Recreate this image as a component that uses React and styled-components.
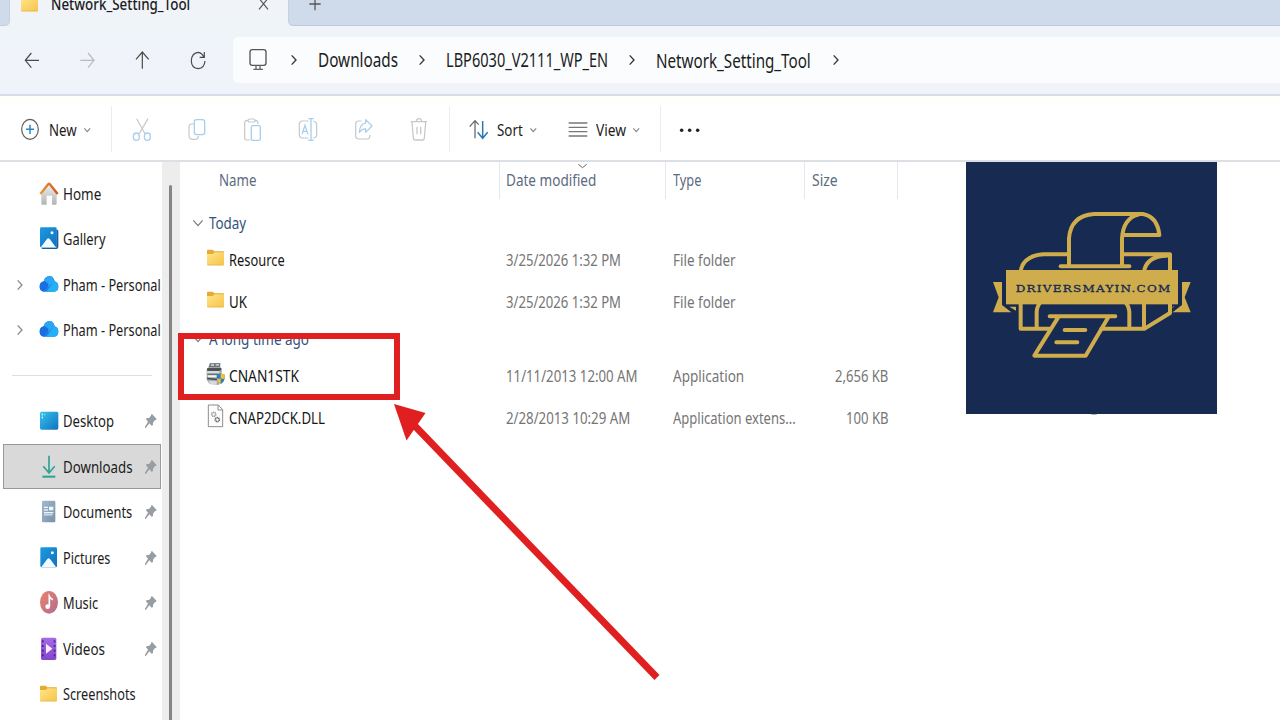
import React, { useLayoutEffect, useRef, useState } from "react";
import styled, { createGlobalStyle } from "styled-components";

const Global = createGlobalStyle`
  * { box-sizing: border-box; }
  html, body { margin: 0; padding: 0; overflow: hidden; background: #fff; }
`;

const Window = styled.div`
  position: relative;
  width: 1280px;
  height: 720px;
  overflow: hidden;
  display: flex;
  flex-direction: column;
  background: #fff;
  color: #1c1c1c;
  font-family: "Noto Sans", "Open Sans", sans-serif;
`;

/* Condensed text: glyphs are squeezed until the label is exactly $w wide. */
const LabelBox = styled.span`
  display: block;
  flex: none;
  width: ${(p) => p.$w}px;
  margin-left: ${(p) => p.$ml || 0}px;
  margin-top: ${(p) => p.$mt || 0}px;
  font-size: ${(p) => p.$size || 17}px;
  font-weight: ${(p) => p.$weight || 400};
  line-height: 24px;
  color: ${(p) => p.$color || "inherit"};
  white-space: nowrap;
`;
const LabelInk = styled.span`
  display: inline-block;
  transform-origin: 0 50%;
`;

function Label({ children, w, size, color, ml, mt, weight }) {
  const ref = useRef(null);
  const [k, setK] = useState(0.8);
  useLayoutEffect(() => {
    setK(w / ref.current.offsetWidth);
  }, [w, children]);
  return (
    <LabelBox $w={w} $size={size} $color={color} $ml={ml} $mt={mt} $weight={weight}>
      <LabelInk ref={ref} style={{ transform: `scaleX(${k})` }}>{children}</LabelInk>
    </LabelBox>
  );
}

const Glyph = styled.svg`
  display: block;
  flex: none;
  overflow: visible;
  margin-left: ${(p) => p.$ml || 0}px;
  margin-top: ${(p) => p.$mt || 0}px;
  fill: none;
`;

/* All drawings use three units per pixel. */
function Icon({ w = 20, h = 24, ml, mt, children }) {
  return (
    <Glyph width={w} height={h} viewBox={`0 0 ${w * 3} ${h * 3}`} $ml={ml} $mt={mt}>
      {children}
    </Glyph>
  );
}

/* ---------- tab strip ---------- */
const TabStrip = styled.div`
  display: flex;
  height: 26px;
  flex: none;
  background: #f0f4f9;
`;
const InactiveEdge = styled.div`
  width: 10px;
  background: #cfdbea;
  border-bottom: 1px solid #bfcde0;
  border-right: 1px solid #c4d1e3;
  border-radius: 0 0 5px 0;
`;
const ActiveTab = styled.div`
  display: flex;
  align-items: center;
  width: 278px;
  height: 43px;
  margin-top: -17px;
  padding-left: 10px;
`;
const StripRest = styled.div`
  flex: 1;
  background: #cfdbea;
  border-bottom: 1px solid #bccadd;
  border-left: 1px solid #c4d1e3;
  border-radius: 0 0 0 5px;
`;
const NewTab = styled.div`
  display: flex;
  align-items: center;
  height: 43px;
  margin-top: -17px;
  padding-left: 20px;
`;

/* ---------- navigation ---------- */
const NavBar = styled.div`
  display: flex;
  align-items: center;
  height: 70px;
  flex: none;
  padding: 11px 0 12px 22px;
  background: linear-gradient(#eff4f9, #f0f3fa);
  border-bottom: 2px solid #d6dde8;
`;
const AddressBar = styled.div`
  display: flex;
  align-items: center;
  flex: 1;
  height: 46px;
  margin-left: 23px;
  padding-left: 16px;
  background: #fafcfe;
  border-radius: 5px 0 0 5px;
`;

/* ---------- command bar ---------- */
const CommandBar = styled.div`
  display: flex;
  align-items: center;
  height: 66px;
  flex: none;
  padding: 4px 0 0 20px;
  background: linear-gradient(#fefefb, #fff 12px);
  border-bottom: 2px solid #dcdfe4;
`;
const Divider = styled.div`
  width: 1px;
  height: 46px;
  background: #ececec;
  margin: 0 0 2px ${(p) => p.$ml}px;
`;
const ToolGroup = styled.div`
  display: flex;
  align-items: center;
  gap: 35.5px;
  margin-left: 19.5px;
`;

/* ---------- body ---------- */
const Body = styled.div`
  display: flex;
  flex: 1;
  min-height: 0;
`;
const Sidebar = styled.div`
  width: 162px;
  flex: none;
  padding-top: 8.75px;
`;
const SideRow = styled.div`
  display: flex;
  align-items: center;
  width: 158px;
  height: 45.5px;
  margin-left: 3px;
  overflow: hidden;
  background: ${(p) => (p.$active ? "#d9d9d9" : "transparent")};
  box-shadow: ${(p) => (p.$active ? "inset 0 0 0 1px #989898" : "none")};
`;
const Expander = styled.div`
  width: 36px;
  flex: none;
  padding-left: 14px;
`;
const Spacer = styled.div`
  flex: 1;
`;
const SideRule = styled.div`
  height: 45.5px;
  padding: 22px 10px 0 12px;
  &::after {
    content: "";
    display: block;
    height: 1.5px;
    background: #dedede;
  }
`;
const ScrollTrack = styled.div`
  width: 18px;
  flex: none;
  padding: 23px 0 0 7px;
  background: #ededed;
  &::after {
    content: "";
    display: block;
    width: 3px;
    height: 100%;
    background: #858585;
    border-radius: 2px 2px 0 0;
  }
`;
const FileList = styled.div`
  width: 718px;
  flex: none;
`;
const HeadRow = styled.div`
  display: grid;
  grid-template-columns: 319.5px 166px 139px 93px;
  height: 36.5px;
  margin-bottom: 8px;
`;
const HeadCell = styled.div`
  position: relative;
  display: flex;
  align-items: center;
  padding-left: ${(p) => p.$pad || 7}px;
  border-right: 1px solid #e3e6ea;
`;
const SortMark = styled.div`
  position: absolute;
  left: 78.5px;
  top: 1px;
`;
const GroupRow = styled.div`
  display: flex;
  align-items: center;
  height: 32px;
  padding-left: 13px;
`;
const FileRow = styled.div`
  display: grid;
  grid-template-columns: 326px 166.5px 135px 80.5px;
  align-items: center;
  height: 42px;
`;
const FileName = styled.div`
  display: flex;
  align-items: center;
  padding-left: 26px;
`;
const SizeCell = styled.div`
  display: flex;
  justify-content: flex-end;
`;

/* ---------- overlays ---------- */
const LogoCard = styled.svg`
  position: absolute;
  left: 966px;
  top: 162px;
`;
const Highlight = styled.div`
  position: absolute;
  left: 177.5px;
  top: 333px;
  width: 222.5px;
  height: 67px;
  border: 6.5px solid #e02020;
`;
const Arrow = styled.svg`
  position: absolute;
  left: 390px;
  top: 400px;
`;
const Nub = styled.div`
  position: absolute;
  left: 1090px;
  top: 412px;
  width: 8px;
  height: 3px;
  background: #a9aec0;
  border-radius: 0 0 4px 4px;
`;

const Right = ({ ml, c = "#444", s = 4 }) => (
  <Icon w={6} h={12} ml={ml}>
    <path d="M2 4 L15 18 L2 32" stroke={c} strokeWidth={s} />
  </Icon>
);
const Down = ({ ml, w = 6.5, c = "#888", s = 3.5 }) => (
  <Icon w={w} h={6} ml={ml}>
    <path d={`M1 4 L${w * 1.5} 14 L${w * 3 - 1} 4`} stroke={c} strokeWidth={s} />
  </Icon>
);
const GroupMark = () => (
  <Icon w={10} h={8}>
    <path d="M1 4 L15 20 L29 4" stroke="#777" strokeWidth="3.5" />
  </Icon>
);

const FolderArt = ({ y = 11 }) => (
  <g transform={`translate(0 ${y})`}>
    <path d="M3 3 Q3 0 6 0 H20 L25 5 H52 Q54 5 54 8 V20 H3Z" fill="#e3ac33" />
    <path d="M3 13 H20 L26 8 H54 V44 Q54 47 51 47 H6 Q3 47 3 44Z" fill="url(#folderFill)" />
    <path d="M4 46 H53" stroke="#dfb040" strokeWidth="2" />
  </g>
);

const PhotoArt = ({ h }) => (
  <>
    <rect x="3" y="1" width="50" height={h} rx="4" fill="url(#photoFill)" />
    <path d={`M6 ${h} L24 ${h - 24} Q28 ${h - 28} 32 ${h - 24} L50 ${h}Z`} fill="#f2fbff" />
    <circle cx="39" cy="17" r="4.5" fill="#e4f8ff" />
  </>
);

const art = {
  home: (
    <>
      <path d="M7 34 L30 10 L53 34 V65 Q53 68 50 68 H39 V41 H23 V68 H10 Q7 68 7 65Z" fill="url(#wallFill)" />
      <path d="M4 36 L28 6 Q30 4 32 6 L56 36" stroke="url(#roofFill)" strokeWidth="7" strokeLinejoin="round" />
    </>
  ),
  gallery: (
    <>
      <path d="M52 8 H55 Q58 9 58 13 V60 Q58 66 52 66 H12 Q8 66 7 62 H52Z" fill="#175d9b" />
      <PhotoArt h={60} />
    </>
  ),
  cloud: (
    <>
      <path d="M15 56 Q2 54 2 41 Q2 28 14 25 Q18 10 31 9 Q43 9 47 25 Q58 28 58 41 Q58 55 45 56Z" fill="#1583e6" />
      <path d="M14 25 Q18 10 31 9 Q43 9 47 25 L28 42 Q24 28 14 25Z" fill="#2ba6f2" />
      <path d="M22 56 L44 26 Q58 28 58 41 Q58 55 45 56Z" fill="#23b0f5" />
      <path d="M14 25 Q24 25 29 36 L15 56 Q2 53 2 41 Q2 28 14 25Z" fill="#1a6fe0" />
    </>
  ),
  desktop: (
    <>
      <rect x="3" y="8" width="55" height="54" rx="5" fill="url(#deskFill)" />
      <g fill="#d9f6ff">
        <rect x="8" y="14" width="4" height="5" /><rect x="8" y="23" width="4" height="5" />
        <rect x="15" y="14" width="4" height="5" opacity=".5" />
      </g>
    </>
  ),
  download: (
    <g stroke="#2fa193">
      <path d="M30 2 V54 M13 34 L30 54 L47 34" strokeWidth="5" />
      <path d="M10 65 H49" strokeWidth="6" />
    </g>
  ),
  document: (
    <>
      <rect x="9" y="2" width="40" height="65" rx="4" fill="url(#docFill)" />
      <g fill="#eef5fb">
        <rect x="15" y="20" width="12" height="4" /><rect x="30" y="20" width="13" height="11" />
        <rect x="15" y="28" width="12" height="4" /><rect x="15" y="36" width="28" height="4" />
        <rect x="15" y="43" width="26" height="3" />
      </g>
    </>
  ),
  pictures: <g transform="translate(1 3)"><PhotoArt h={60} /></g>,
  music: (
    <>
      <ellipse cx="30" cy="34" rx="27" ry="34" fill="url(#musicFill)" />
      <ellipse cx="26" cy="47" rx="7" ry="7" fill="#fff" />
      <path d="M31 47 V16 Q36 25 42 26" stroke="#fff" strokeWidth="5" />
    </>
  ),
  video: (
    <>
      <rect x="6" y="2" width="46" height="67" rx="5" fill="url(#videoFill)" />
      <g fill="#4b2288">
        {[10, 24, 38, 52].map((y) => (
          <React.Fragment key={y}>
            <rect x="9" y={y} width="5" height="6" /><rect x="44" y={y} width="5" height="6" />
          </React.Fragment>
        ))}
      </g>
      <path d="M21 20 L40 35 L21 50Z" fill="#f7efff" />
    </>
  ),
  folder: <FolderArt />,
};

const Pin = () => (
  <Icon w={12} h={14}>
    <path d="M21 0 L35 15 L33 18 L30 18 L24 26 L24 33 L20 35 L13 28 L3 41 L0 42 L0 38 L9 23 L3 16 L5 12 L12 12 L18 5 L18 2Z" fill="#969da3" />
  </Icon>
);

function SideItem({ icon, name, w, pin, expand, active }) {
  return (
    <SideRow $active={active}>
      <Expander>{expand && <Right c="#8a8a8a" s={4} />}</Expander>
      <Icon>{art[icon]}</Icon>
      <Label ml={4} w={w}>{name}</Label>
      <Spacer />
      {pin && <Pin />}
      {pin && <Icon w={4} h={2} />}
    </SideRow>
  );
}

const fileArt = {
  folder: (
    <Icon w={18} h={18} mt={-3}><FolderArt y={2} /></Icon>
  ),
  printer: (
    <Icon w={20} h={24} mt={-1}>
      <path d="M8 12 L12 1 H43 V12 L47 18 V46 L38 66 L10 62 L2 50 V20Z" fill="#a3a8ab" />
      <path d="M12 1 H43 L41 12 H8Z" fill="#6d7377" />
      <path d="M16 3 H24 V9 H14Z M29 3 H39 V8 H29Z" fill="#c3c8cb" />
      <path d="M4 15 H46 V20 L40 24 H3Z" fill="#4c5256" />
      <path d="M3 24 H40 V31 H4Z" fill="#d9dcde" />
      <path d="M4 32 H38 V36 H5Z" fill="#6a7074" />
      <path d="M5 37 H37 V43 H6Z" fill="#f0f1f1" />
      <path d="M3 44 L36 47 V52 L4 49Z" fill="#42484c" />
      <path d="M8 53 L34 55 L30 67 L12 64Z" fill="#d5d9dc" />
      <path d="M32 35 L44 31 L56 35 V48 Q54 58 44 64 Q34 58 32 48Z" fill="#2c7fc4" />
      <path d="M44 31 L56 35 V47 H44Z M32 47 H44 V64 Q34 58 32 47Z" fill="#f4c22c" />
    </Icon>
  ),
  dll: (
    <Icon w={20} h={24} mt={-3}>
      <path d="M7 3 H37 L50 17 V68 H7Z" fill="#fdfdfd" stroke="#777" strokeWidth="2.5" />
      <path d="M36 3 V18 H50" stroke="#777" strokeWidth="2.5" />
      <circle cx="23" cy="31" r="6.5" stroke="#999" strokeWidth="4" strokeDasharray="3.5 1.6" />
      <circle cx="34" cy="47" r="6" stroke="#666" strokeWidth="5" strokeDasharray="3.5 1.2" />
      <circle cx="23" cy="31" r="5" stroke="#aaa" strokeWidth="2" />
    </Icon>
  ),
};

function FileItem({ icon, name, nameW, date, dateW, type, typeW, size, sizeW }) {
  const gray = "#757575";
  return (
    <FileRow>
      <FileName>
        {fileArt[icon]}
        <Label ml={icon === "folder" ? 5 : 3} w={nameW} color="#151515">{name}</Label>
      </FileName>
      <Label w={dateW} color={gray}>{date}</Label>
      <Label w={typeW} color={gray}>{type}</Label>
      <SizeCell>{size && <Label w={sizeW} color={gray}>{size}</Label>}</SizeCell>
    </FileRow>
  );
}

const Gradients = () => (
  <Glyph width="0" height="0">
    <defs>
      <linearGradient id="folderFill" x1="0" y1="0" x2="1" y2="1">
        <stop offset="0" stopColor="#ffe38c" /><stop offset="1" stopColor="#f6c545" />
      </linearGradient>
      <linearGradient id="photoFill" x1="0" y1="0" x2="1" y2="1">
        <stop offset="0" stopColor="#1b9be0" /><stop offset="1" stopColor="#1470bd" />
      </linearGradient>
      <linearGradient id="wallFill" x1="0" y1="0" x2="0" y2="1">
        <stop offset="0" stopColor="#ededed" /><stop offset="1" stopColor="#b3b3b3" />
      </linearGradient>
      <linearGradient id="roofFill" x1="0" y1="0" x2="1" y2="0">
        <stop offset="0" stopColor="#e99a2e" /><stop offset="1" stopColor="#cf5026" />
      </linearGradient>
      <linearGradient id="deskFill" x1="0" y1="0" x2="1" y2="1">
        <stop offset="0" stopColor="#35c3ee" /><stop offset="1" stopColor="#1272bf" />
      </linearGradient>
      <linearGradient id="docFill" x1="0" y1="0" x2="1" y2="1">
        <stop offset="0" stopColor="#a2b9cc" /><stop offset="1" stopColor="#7891ab" />
      </linearGradient>
      <linearGradient id="musicFill" x1="0" y1="0" x2="1" y2="1">
        <stop offset="0" stopColor="#e98468" /><stop offset="1" stopColor="#b56a94" />
      </linearGradient>
      <linearGradient id="videoFill" x1="0" y1="0" x2="0" y2="1">
        <stop offset="0" stopColor="#a56be6" /><stop offset="1" stopColor="#8344cf" />
      </linearGradient>
    </defs>
  </Glyph>
);

const gold = "#d0ad4c";

function Logo() {
  return (
    <LogoCard width="251" height="252" viewBox="18 21 753 756" preserveAspectRatio="none">
      <rect x="18" y="21" width="753" height="756" fill="#172b52" />
      <g fill="none" stroke={gold} strokeWidth="12" strokeLinecap="round" strokeLinejoin="round">
        <path d="M327 330 V250 Q332 182 402 177 H548 Q592 184 598 240 H490" />
        <path d="M486 330 V250 Q490 190 535 179" />
        <path d="M302 334 H508" />
        <path d="M322 298 H250 Q188 303 182 350 M490 298 H630 V350" />
        <path d="M552 350 Q560 303 620 302" />
        <path d="M182 445 V521 H268 M230 521 V470 Q232 448 245 440 M424 521 H554 L630 474 V445 M508 521 V470 Q506 450 494 440 M552 445 V518" />
        <path d="M269 484 H466 M294 488 L223 602 H377 L444 488 M314 525 H376 M289 562 H352" />
      </g>
      <g fill={gold}>
        <path d="M99 381 H126 V450 L154 472 H99 L116 427Z M148 455 H168 V467Z" />
        <path d="M692 381 H666 V450 L638 472 H692 L674 427Z M638 455 L643 453 L638 460Z" />
        <rect x="138" y="345" width="516" height="103" />
      </g>
      <text
        x="167" y="411" fill="#172b52" stroke="#172b52" strokeWidth="0.9"
        fontFamily='"DejaVu Serif", serif' fontSize="28"
        letterSpacing="3" textLength="468" lengthAdjust="spacingAndGlyphs"
      >
        DRIVERSMAYIN.COM
      </text>
    </LogoCard>
  );
}

const faint = "#c6c8ca";
const blue = "#a5cfee";

export default function App() {
  return (
    <Window>
      <Global />
      <TabStrip>
        <Gradients />
        <InactiveEdge />
        <ActiveTab>
          <Icon w={20} h={24} mt={-1}><FolderArt y={11} /></Icon>
          <Label ml={11} mt={-1} w={139.5} size={17} weight={500}>Network_Setting_Tool</Label>
          <Icon w={11} h={12} ml={67} mt={-1}>
            <path d="M3 1 L30 34 M30 1 L3 34" stroke="#555" strokeWidth="3.5" />
          </Icon>
        </ActiveTab>
        <StripRest>
          <NewTab>
            <Icon w={12} h={12} mt={-1}>
              <path d="M18 0 V37 M1 18 H35" stroke="#555" strokeWidth="3.8" />
            </Icon>
          </NewTab>
        </StripRest>
      </TabStrip>

      <NavBar>
        <Icon ml={2}>
          <path d="M4 37 H45 M22 15 L4 37 L22 59" stroke="#4a4a4a" strokeWidth="3.6" />
        </Icon>
        <Icon ml={36}>
          <path d="M1 37 H42 M24 15 L42 37 L24 59" stroke="#b7bbbf" strokeWidth="3.6" />
        </Icon>
        <Icon ml={35}>
          <path d="M22 62 V13 M3 34 L22 12 L41 34" stroke="#4a4a4a" strokeWidth="3.6" />
        </Icon>
        <Icon ml={35}>
          <path d="M45 39 Q43 61 25 62 Q4 60 4 38 Q5 15 25 13 Q36 14 41 27 M43 12 V28 H29" stroke="#4a4a4a" strokeWidth="3.6" />
        </Icon>
        <AddressBar>
          <Icon w={20} h={24}>
            <rect x="3" y="5" width="48" height="47" rx="7" stroke="#555" strokeWidth="4" />
            <path d="M21 52 V63 M33 52 V63 M13 64 H42" stroke="#666" strokeWidth="4" />
          </Icon>
          <Right ml={21.5} c="#333" />
          <Label ml={21.5} w={80} size={19.5}>Downloads</Label>
          <Right ml={21} c="#333" />
          <Label ml={21} w={162} size={19.5}>LBP6030_V2111_WP_EN</Label>
          <Right ml={21} c="#333" />
          <Label ml={21} mt={2} w={155} size={19.5}>Network_Setting_Tool</Label>
          <Right ml={21.5} c="#333" />
        </AddressBar>
      </NavBar>

      <CommandBar>
        <Icon ml={0}>
          <ellipse cx="30" cy="34" rx="25" ry="30" stroke="#5c5c5c" strokeWidth="3.6" />
          <path d="M30 20 V48 M18 34 H42" stroke="#2c86c2" strokeWidth="4.5" />
        </Icon>
        <Label ml={9} w={28}>New</Label>
        <Down ml={7} />
        <Divider $ml={20.5} />
        <ToolGroup>
          <Icon>
            <path d="M14 2 L39 47 M48 2 L22 47" stroke={faint} strokeWidth="3.5" />
            <ellipse cx="13" cy="56" rx="9" ry="11" stroke={blue} strokeWidth="4" />
            <ellipse cx="46" cy="56" rx="9" ry="11" stroke={blue} strokeWidth="4" />
          </Icon>
          <Icon>
            <path d="M20 18 H12 Q6 19 6 26 V54 Q7 64 18 64 H26 Q34 63 34 54" stroke={faint} strokeWidth="3.6" />
            <rect x="22" y="5" width="31" height="45" rx="7" stroke={blue} strokeWidth="4" />
          </Icon>
          <Icon>
            <path d="M15 8 H8 Q5 9 5 14 V60 Q5 66 10 66 H22 M35 8 H41 Q45 9 45 19" stroke={faint} strokeWidth="3.6" />
            <rect x="15" y="3" width="21" height="9" rx="4" stroke={faint} strokeWidth="3.6" />
            <rect x="25" y="23" width="27" height="44" rx="5" stroke={blue} strokeWidth="4" />
          </Icon>
          <Icon>
            <path d="M32 9 H12 Q4 10 4 19 V51 Q5 60 12 60 H32 M46 9 Q55 10 56 19 V51 Q55 59 46 60" stroke={faint} strokeWidth="3.6" />
            <path d="M12 49 L21 22 L30 49 M15 40 H27" stroke={blue} strokeWidth="3.8" />
            <path d="M39 3 V66 M31 2 H47 M31 67 H47" stroke={blue} strokeWidth="4" />
          </Icon>
          <Icon>
            <path d="M22 9 H13 Q5 10 5 19 V54 Q6 63 13 63 H40 Q48 62 48 50" stroke={faint} strokeWidth="3.6" />
            <path d="M35 5 L54 24 L35 43 V33 Q24 32 16 43 Q17 18 35 15Z" stroke={blue} strokeWidth="3.8" strokeLinejoin="round" />
          </Icon>
          <Icon>
            <path d="M5 11 H54 M22 10 Q23 2 30 2 Q37 2 38 10 M9 12 L13 61 Q14 66 19 66 H40 Q45 66 46 61 L50 12 M24 27 V49 M35 27 V49" stroke={faint} strokeWidth="3.8" />
          </Icon>
        </ToolGroup>
        <Divider $ml={20} />
        <Icon ml={18.5}>
          <path d="M18 61 V9 M2 26 L18 8 L29 20" stroke="#666" strokeWidth="3.8" />
          <path d="M41 9 V60 M26 43 L41 61 L56 43" stroke="#2679b5" strokeWidth="4.4" />
        </Icon>
        <Label ml={8} w={26}>Sort</Label>
        <Down ml={7} />
        <Icon ml={31.5}>
          <path d="M2 15 H58 M2 28 H58 M2 41 H58 M2 54 H58" stroke="#777" strokeWidth="4.2" />
        </Icon>
        <Label ml={8} w={30}>View</Label>
        <Down ml={7} />
        <Divider $ml={21} />
        <Icon ml={19}>
          <g fill="#222">
            <circle cx="5" cy="37" r="5.3" /><circle cx="29" cy="37" r="5.3" /><circle cx="53" cy="37" r="5.3" />
          </g>
        </Icon>
      </CommandBar>

      <Body>
        <Sidebar>
          <SideItem icon="home" name="Home" w={38} />
          <SideItem icon="gallery" name="Gallery" w={42.5} />
          <SideItem icon="cloud" name="Pham - Personal" w={97.5} expand />
          <SideItem icon="cloud" name="Pham - Personal" w={97.5} expand />
          <SideRule />
          <SideItem icon="desktop" name="Desktop" w={51} pin />
          <SideItem icon="download" name="Downloads" w={69.5} pin active />
          <SideItem icon="document" name="Documents" w={69.5} pin />
          <SideItem icon="pictures" name="Pictures" w={47.5} pin />
          <SideItem icon="music" name="Music" w={35.5} pin />
          <SideItem icon="video" name="Videos" w={42} pin />
          <SideItem icon="folder" name="Screenshots" w={72.5} />
        </Sidebar>
        <ScrollTrack />
        <FileList>
          <HeadRow>
            <HeadCell $pad={39}><Label w={37.5} color="#5b6b7f">Name</Label></HeadCell>
            <HeadCell $pad={6.5}>
              <SortMark><Down w={9} c="#666" s={3} /></SortMark>
              <Label w={90} color="#5b6b7f">Date modified</Label>
            </HeadCell>
            <HeadCell><Label w={28.5} color="#5b6b7f">Type</Label></HeadCell>
            <HeadCell><Label w={25.5} color="#5b6b7f">Size</Label></HeadCell>
          </HeadRow>
          <GroupRow>
            <GroupMark />
            <Label ml={6} w={37} color="#33527c">Today</Label>
          </GroupRow>
          <FileItem icon="folder" name="Resource" nameW={56} date="3/25/2026 1:32 PM" dateW={115} type="File folder" typeW={62.5} />
          <FileItem icon="folder" name="UK" nameW={18} date="3/25/2026 1:32 PM" dateW={115} type="File folder" typeW={62.5} />
          <GroupRow>
            <GroupMark />
            <Label ml={6} w={100} color="#33527c">A long time ago</Label>
          </GroupRow>
          <FileItem icon="printer" name="CNAN1STK" nameW={69.5} date="11/11/2013 12:00 AM" dateW={131.5} type="Application" typeW={71.5} size="2,656 KB" sizeW={53} />
          <FileItem icon="dll" name="CNAP2DCK.DLL" nameW={96} date="2/28/2013 10:29 AM" dateW={124} type="Application extens..." typeW={122.5} size="100 KB" sizeW={42.5} />
        </FileList>
      </Body>

      <Nub />
      <Logo />
      <Highlight />
      <Arrow width="280" height="290" viewBox="390 400 280 290">
        <path d="M414 425 L657 677.5" stroke="#e02020" strokeWidth="7" />
        <path d="M394 404 L425.5 413 L406.5 440.5Z" fill="#e02020" />
      </Arrow>
    </Window>
  );
}
